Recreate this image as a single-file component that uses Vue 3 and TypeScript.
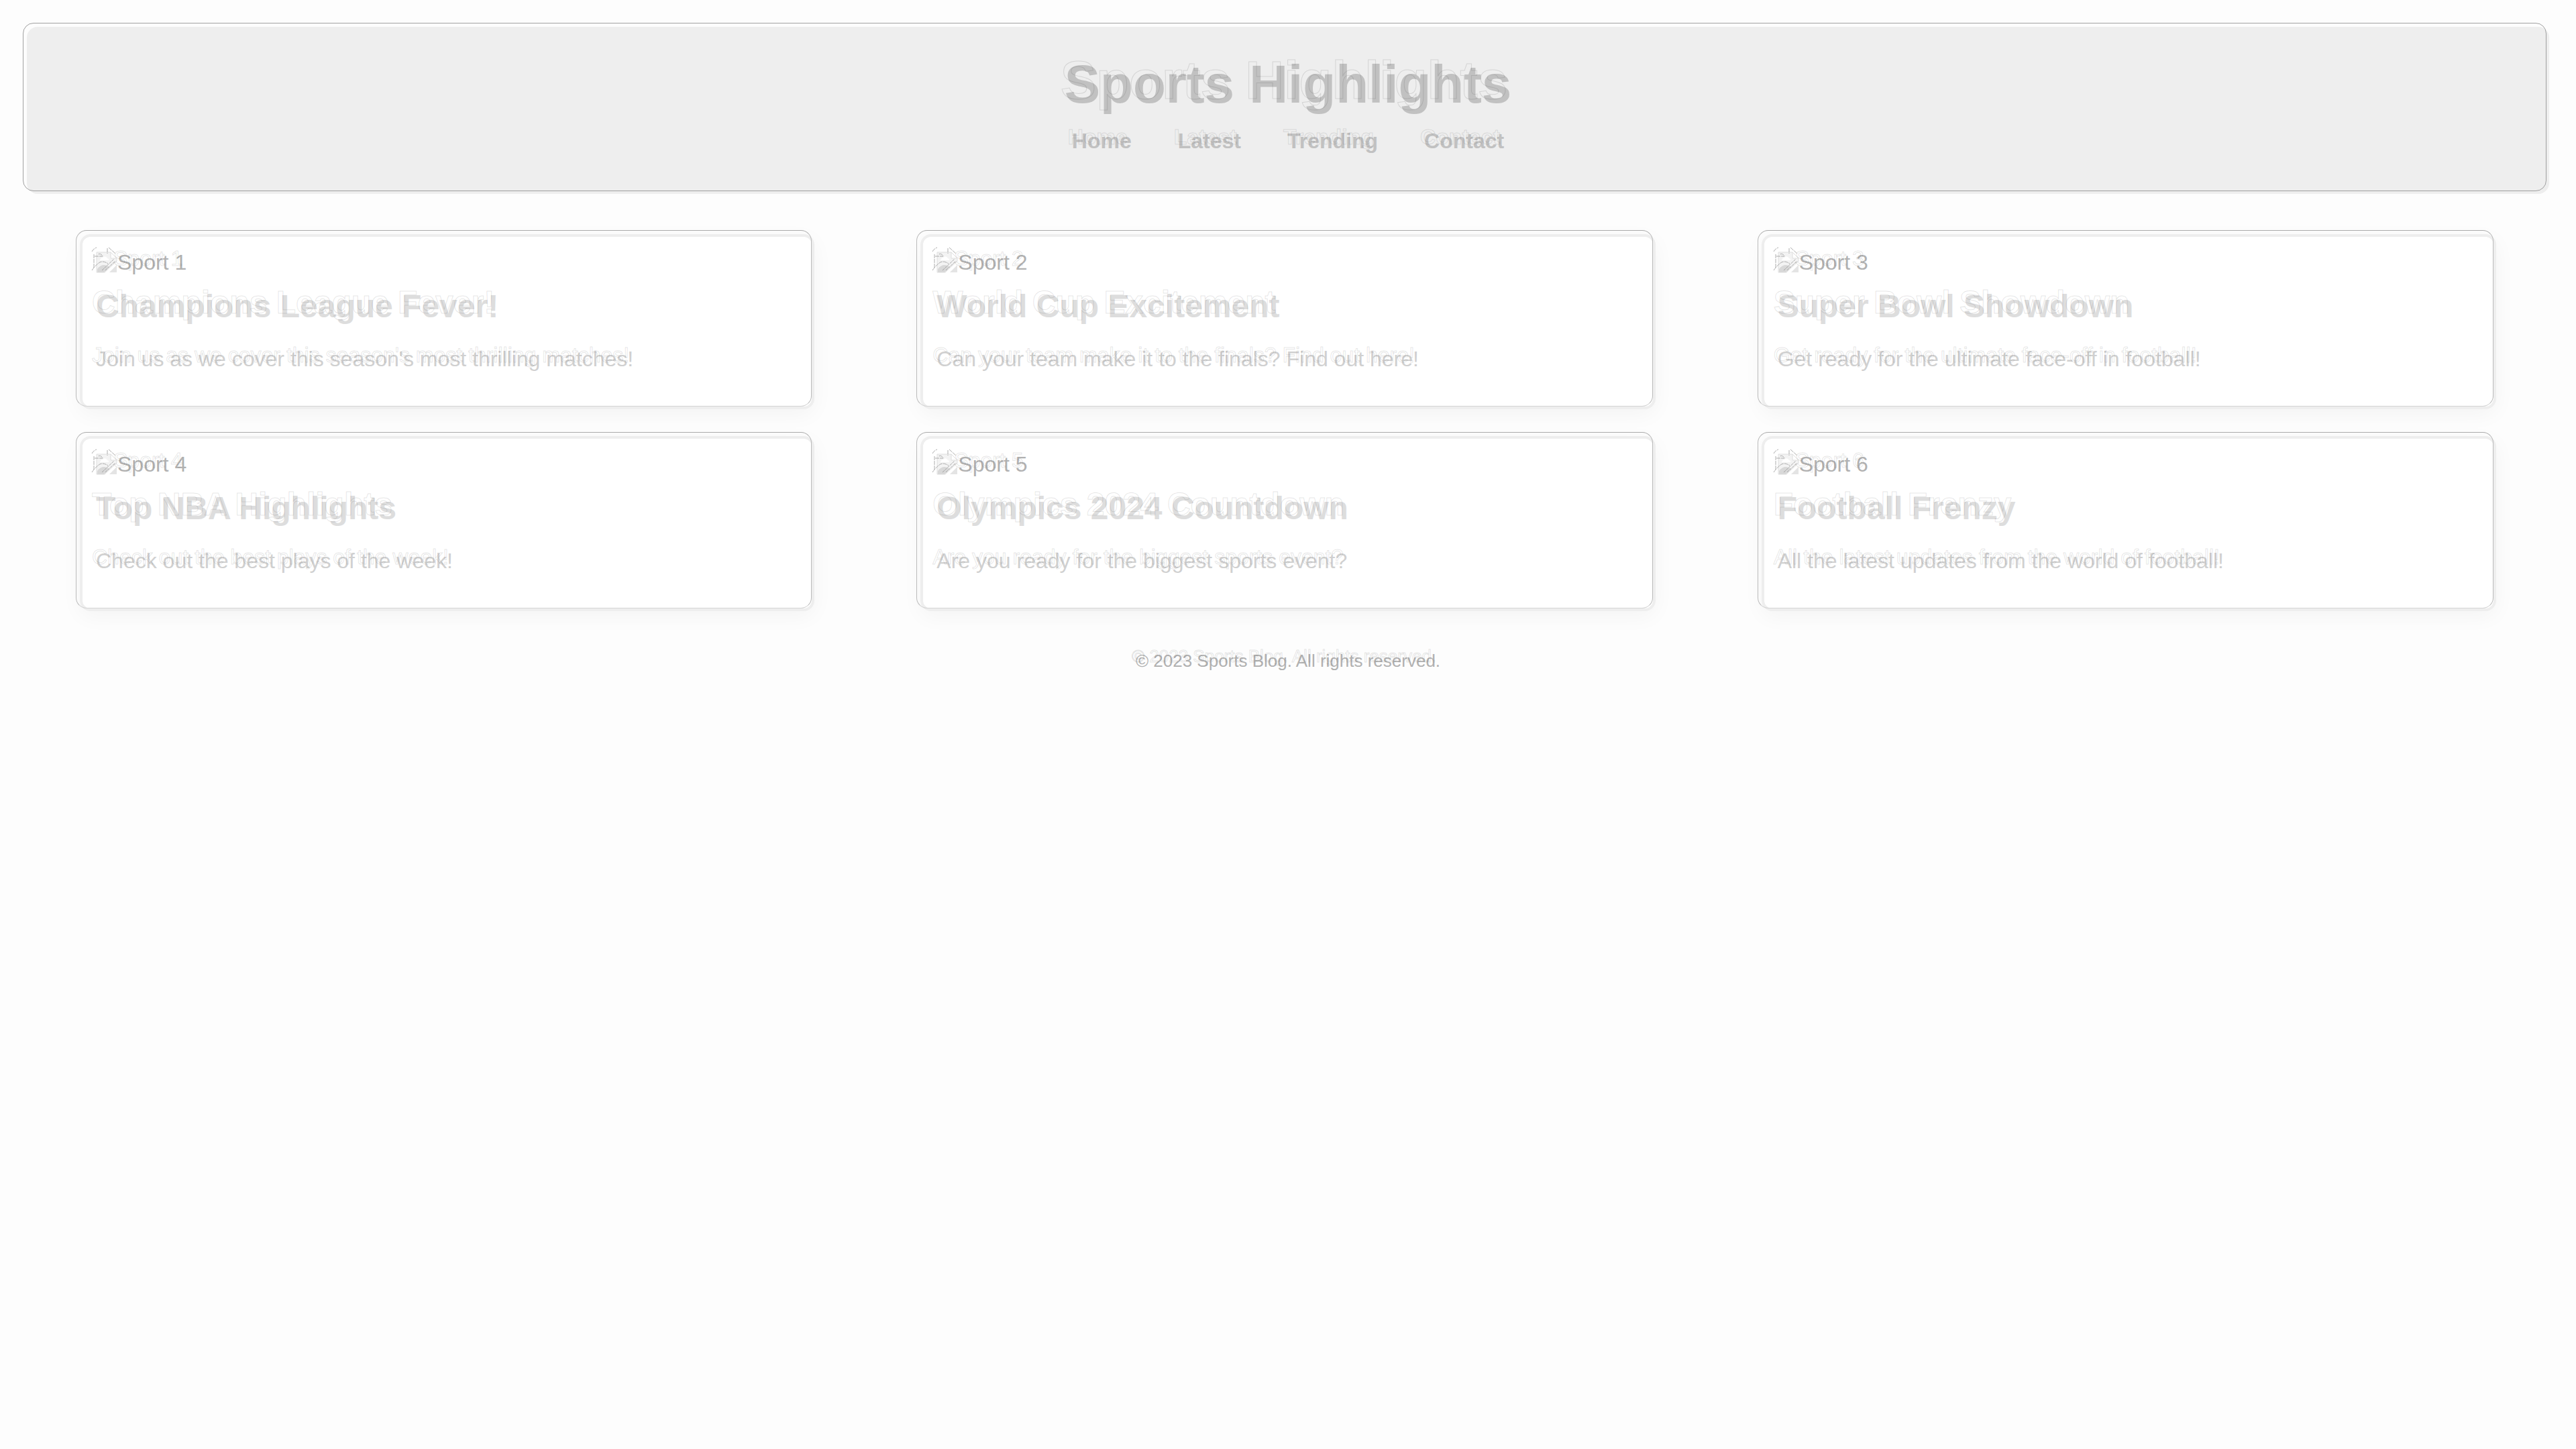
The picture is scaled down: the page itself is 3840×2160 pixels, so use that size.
<script setup lang="ts">
interface Post {
  label: string
  title: string
  text: string
}

const links: string[] = ['Home', 'Latest', 'Trending', 'Contact']

const posts: Post[] = [
  { label: 'Sport 1', title: 'Champions League Fever!', text: "Join us as we cover this season's most thrilling matches!" },
  { label: 'Sport 2', title: 'World Cup Excitement', text: 'Can your team make it to the finals? Find out here!' },
  { label: 'Sport 3', title: 'Super Bowl Showdown', text: 'Get ready for the ultimate face-off in football!' },
  { label: 'Sport 4', title: 'Top NBA Highlights', text: 'Check out the best plays of the week!' },
  { label: 'Sport 5', title: 'Olympics 2024 Countdown', text: 'Are you ready for the biggest sports event?' },
  { label: 'Sport 6', title: 'Football Frenzy', text: 'All the latest updates from the world of football!' },
]
</script>

<template>
  <div class="page">
    <header class="header edge">
      <h1 class="etched" data-text="Sports Highlights">Sports Highlights</h1>
      <nav class="nav">
        <a v-for="link in links" :key="link" href="#" class="etched" :data-text="link">{{ link }}</a>
      </nav>
    </header>

    <main class="posts">
      <article v-for="post in posts" :key="post.title" class="card edge">
        <div class="media">
          <svg class="icon" viewBox="0 0 32 32" aria-hidden="true">
            <path d="M1 1H22L31 10V14L13 31H1Z" fill="#f3f3f3" stroke="#dedede" />
            <path d="M31 20V31H20Z" fill="#e4e4e4" />
            <path d="M2 26Q10 16 20 23L12 31H2Z" fill="#d8d8d8" />
            <path d="M6 13Q7 9 10 9Q14 5 17 10Q20 11 19 13Z" fill="#fff" />
            <path d="M22 1V10H31Z" fill="#fff" stroke="#dedede" />
            <g fill="none" stroke="#999" stroke-width="1" opacity="0.8">
              <path d="M-6 0Q-4 -4 1 -6M17 -5V3M19 -6L29 3M-2 7H10Q8 2 3 4M-3 4V24M-6 28Q-2 22 3 18Q9 12 18 18" stroke-dasharray="6 1" />
              <path d="M9 28L27 11M14 28L28 15" stroke-dasharray="4 1" />
            </g>
          </svg>
          <span class="etched" :data-text="post.label">{{ post.label }}</span>
        </div>
        <h2 class="etched" :data-text="post.title">{{ post.title }}</h2>
        <p class="etched" :data-text="post.text">{{ post.text }}</p>
      </article>
    </main>

    <footer class="footer">
      <span class="etched" data-text="© 2023 Sports Blog. All rights reserved.">© 2023 Sports Blog. All rights reserved.</span>
    </footer>
  </div>
</template>

<style>
body {
  margin: 0;
  background: #fdfdfd;
}
</style>

<style scoped>
.page {
  box-sizing: border-box;
  padding: 40px;
  font-family: "Liberation Sans", Arial, sans-serif;
  font-size: 32px;
  line-height: 36px;
}

/* Thin frame set up and to the left of a panel */
.edge {
  position: relative;
}

.edge::before {
  content: "";
  position: absolute;
  inset: -6px 4px 4px -6px;
  border: 1px solid #a0a0a0;
  border-radius: 16px;
  pointer-events: none;
}

/* Faint engraved outline behind the letters */
.etched {
  position: relative;
}

.etched::before {
  content: attr(data-text) / "";
  position: absolute;
  top: -6px;
  left: -6px;
  white-space: nowrap;
  color: transparent;
  -webkit-text-stroke: 1px rgba(60, 60, 60, 0.14);
  pointer-events: none;
}

.header {
  box-sizing: border-box;
  min-height: 249px;
  padding: 40px;
  border-radius: 16px;
  background: #eee;
  text-align: center;
}

.header h1 {
  width: fit-content;
  margin: 0 auto;
  font-size: 80px;
  line-height: 92px;
  color: #c1c1c1;
}

.nav {
  display: flex;
  justify-content: center;
  gap: 69px;
  margin-top: 20px;
}

.nav a {
  font-weight: bold;
  color: #c1c1c1;
  text-decoration: none;
}

.posts {
  display: flex;
  flex-wrap: wrap;
  justify-content: space-around;
  row-gap: 40px;
  margin-top: 60px;
}

.posts .card {
  box-sizing: border-box;
  flex: 0 0 calc(33.3333% - 158px);
  margin: 0 79px;
  min-height: 261px;
  padding: 20px;
  border: 4px solid #eee;
  border-radius: 16px;
  background: #fff;
  box-shadow: 0 8px 32px rgba(0, 0, 0, 0.04);
}

.card.edge::before {
  inset: -10px 0 0 -10px;
  border-color: #aaa #bbb #d4d4d4 #bbb;
}

.media {
  display: flex;
  align-items: center;
  color: #b1b1b1;
}

.icon {
  width: 32px;
  height: 32px;
  overflow: visible;
}

.card h2 {
  width: fit-content;
  margin: 20px 0 32px;
  font-size: 48px;
  line-height: 56px;
  color: #ddd;
}

.card p {
  width: fit-content;
  margin: 0;
  color: #d0d0d0;
}

.footer {
  margin-top: 60px;
  font-size: 26px;
  line-height: 28px;
  text-align: center;
  color: #b1b1b1;
}
</style>
